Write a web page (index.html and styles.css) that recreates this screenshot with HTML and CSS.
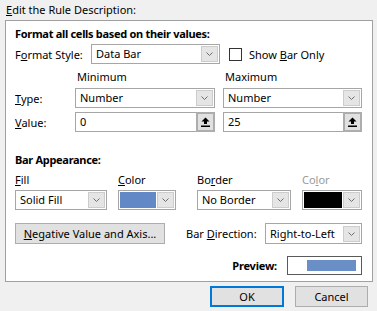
FILE: index.html
```html
<!DOCTYPE html>
<html>
<head>
<meta charset="utf-8">
<link rel="stylesheet" href="styles.css">
</head>
<body>
<div class="dialog">
  <div class="title"><u>E</u>dit the Rule Description:</div>
  <div class="panel">
    <div class="heading">Format all cells based on their values:</div>
    <div class="row style-row">
      <span class="lbl style-lbl">F<u>o</u>rmat Style:</span>
      <div class="select style-select"><span class="val">Data Bar</span><span class="arrow"><svg width="7" height="4" viewBox="0 0 7 4"><path d="M0.5 0.5 L3.5 3.5 L6.5 0.5" fill="none" stroke="#6d6d6d" stroke-width="1"/></svg></span></div>
      <span class="checkbox"></span>
      <span class="lbl">Show <u>B</u>ar Only</span>
    </div>
    <div class="grid mm">
      <span></span>
      <span class="colhead">Minimum</span>
      <span class="colhead">Maximum</span>
      <span class="lbl"><u>T</u>ype:</span>
      <div class="select"><span class="val">Number</span><span class="arrow"><svg width="7" height="4" viewBox="0 0 7 4"><path d="M0.5 0.5 L3.5 3.5 L6.5 0.5" fill="none" stroke="#6d6d6d" stroke-width="1"/></svg></span></div>
      <div class="select"><span class="val">Number</span><span class="arrow"><svg width="7" height="4" viewBox="0 0 7 4"><path d="M0.5 0.5 L3.5 3.5 L6.5 0.5" fill="none" stroke="#6d6d6d" stroke-width="1"/></svg></span></div>
      <span class="lbl"><u>V</u>alue:</span>
      <div class="input"><span class="val">0</span><span class="ref"><svg width="9" height="10" viewBox="0 0 9 10"><path d="M4.5 0.5 L8.5 4.5 L6 4.5 L6 7 L3 7 L3 4.5 L0.5 4.5 Z" fill="#000"/><rect x="0" y="8.5" width="9" height="1.5" fill="#000"/></svg></span></div>
      <div class="input"><span class="val">25</span><span class="ref"><svg width="9" height="10" viewBox="0 0 9 10"><path d="M4.5 0.5 L8.5 4.5 L6 4.5 L6 7 L3 7 L3 4.5 L0.5 4.5 Z" fill="#000"/><rect x="0" y="8.5" width="9" height="1.5" fill="#000"/></svg></span></div>
    </div>
    <div class="heading bar-head">Bar Appearance:</div>
    <div class="app">
      <div class="field f-fill">
        <span class="lbl"><u>F</u>ill</span>
        <div class="select"><span class="val">Solid Fill</span><span class="arrow"><svg width="7" height="4" viewBox="0 0 7 4"><path d="M0.5 0.5 L3.5 3.5 L6.5 0.5" fill="none" stroke="#6d6d6d" stroke-width="1"/></svg></span></div>
      </div>
      <div class="field f-color">
        <span class="lbl"><u>C</u>olor</span>
        <div class="select colorsel"><span class="swatch blue"></span><span class="arrow"><svg width="7" height="4" viewBox="0 0 7 4"><path d="M0.5 0.5 L3.5 3.5 L6.5 0.5" fill="none" stroke="#6d6d6d" stroke-width="1"/></svg></span></div>
      </div>
      <div class="field f-border">
        <span class="lbl">Bo<u>r</u>der</span>
        <div class="select"><span class="val">No Border</span><span class="arrow"><svg width="7" height="4" viewBox="0 0 7 4"><path d="M0.5 0.5 L3.5 3.5 L6.5 0.5" fill="none" stroke="#6d6d6d" stroke-width="1"/></svg></span></div>
      </div>
      <div class="field f-color2">
        <span class="lbl disabled">Co<u>l</u>or</span>
        <div class="select colorsel"><span class="swatch black"></span><span class="arrow"><svg width="7" height="4" viewBox="0 0 7 4"><path d="M0.5 0.5 L3.5 3.5 L6.5 0.5" fill="none" stroke="#6d6d6d" stroke-width="1"/></svg></span></div>
      </div>
    </div>
    <div class="row dir-row">
      <button class="btn neg"><u>N</u>egative Value and Axis...</button>
      <span class="lbl dir-lbl">Bar <u>D</u>irection:</span>
      <div class="select dir-select"><span class="val">Right-to-Left</span><span class="arrow"><svg width="7" height="4" viewBox="0 0 7 4"><path d="M0.5 0.5 L3.5 3.5 L6.5 0.5" fill="none" stroke="#6d6d6d" stroke-width="1"/></svg></span></div>
    </div>
    <div class="row preview-row">
      <span class="preview-lbl">Preview:</span>
      <div class="preview"><span class="pbar"></span></div>
    </div>
  </div>
  <div class="buttons">
    <button class="btn ok">OK</button>
    <button class="btn cancel">Cancel</button>
  </div>
</div>
</body>
</html>
```

FILE: styles.css
```css
* { box-sizing: border-box; }
html, body { margin: 0; padding: 0; }
body {
  background: #f0f0f0;
  font-family: "Noto Sans", "Open Sans", sans-serif;
  font-size: 11px;
  color: #000;
  width: 377px;
  height: 311px;
  overflow: hidden;
}
u { text-decoration: underline; text-underline-offset: 1px; }
.title {
  padding: 3px 0 0 6px;
  line-height: 14px;
  height: 20px;
}
.panel {
  margin-left: 5px;
  width: 368px;
  height: 262px;
  border: 1px solid #a0a0a0;
  background: #fff;
  padding: 0 10px 0 9px;
}
.heading {
  font-weight: bold;
  line-height: 14px;
  margin-top: 6px;
  letter-spacing: -0.3px;
}
.row { display: flex; align-items: center; }
.style-row { margin-top: 3px; height: 20px; }
.style-lbl { width: 76px; }
.select, .input {
  position: relative;
  height: 20px;
  border: 1px solid #a6a6a6;
  background: #fff;
  display: flex;
  align-items: center;
}
.val { padding-left: 4px; flex: 1; line-height: 14px; white-space: nowrap; }
.arrow {
  width: 17px;
  height: 16px;
  margin-right: 1px;
  background: #e5e5e5;
  border: 1px solid #cccccc;
  display: flex;
  align-items: center;
  justify-content: center;
}
.style-select { width: 129px; }
.checkbox {
  width: 13px; height: 13px;
  border: 1px solid #333;
  background: #fff;
  margin: 0 7px 0 9px;
}
.grid {
  display: grid;
  grid-template-columns: 52px 140px 139px;
  column-gap: 8px;
  align-items: center;
}
.mm { margin-top: 6px; grid-template-rows: 14px 20px 20px; row-gap: 4px; }
.mm .colhead { line-height: 14px; padding-left: 2px; }
.ref {
  position: absolute;
  right: -1px; top: -1px;
  width: 19px; height: 20px;
  background: #e1e1e1;
  border: 2px solid #adadad;
  display: flex;
  align-items: center;
  justify-content: center;
}
.bar-head { margin-top: 21px; }
.app { display: flex; margin-top: 6px; }
.field { display: flex; flex-direction: column; }
.field .lbl { line-height: 14px; height: 17px; }
.f-fill { width: 92px; margin-right: 11px; }
.f-color { width: 58px; margin-right: 21px; }
.f-border { width: 94px; margin-right: 11px; }
.f-color2 { width: 60px; }
.field .select { width: 100%; }
.disabled { color: #9a9a9a; }
.colorsel { padding-left: 1px; }
.swatch { flex: 1; height: 16px; margin-right: 1px; }
.swatch.blue { background: #6289c6; }
.swatch.black { background: #000; }
.dir-row { margin-top: 13px; height: 21px; }
.btn {
  font: inherit;
  color: #000;
  background: #e1e1e1;
  border: 1px solid #adadad;
  padding: 0;
  height: 21px;
}
.neg { width: 150px; }
.dir-lbl { margin-left: 21px; width: 79px; }
.dir-select { width: 97px; height: 21px; }
.preview-row { margin-top: 12px; height: 19px; justify-content: flex-end; }
.preview-lbl { font-weight: bold; margin-right: 10px; letter-spacing: -0.2px; }
.preview {
  width: 75px; height: 19px;
  border: 1px solid #5a5a5a;
  padding: 3px 5px 3px 19px;
  display: flex;
}
.pbar { flex: 1; background: #6a8fc7; }
.buttons {
  display: flex;
  margin-top: 4px;
  padding-left: 210px;
  gap: 11px;
}
.ok { width: 74px; border: 2px solid #0078d7; }
.cancel { width: 73px; }
```
